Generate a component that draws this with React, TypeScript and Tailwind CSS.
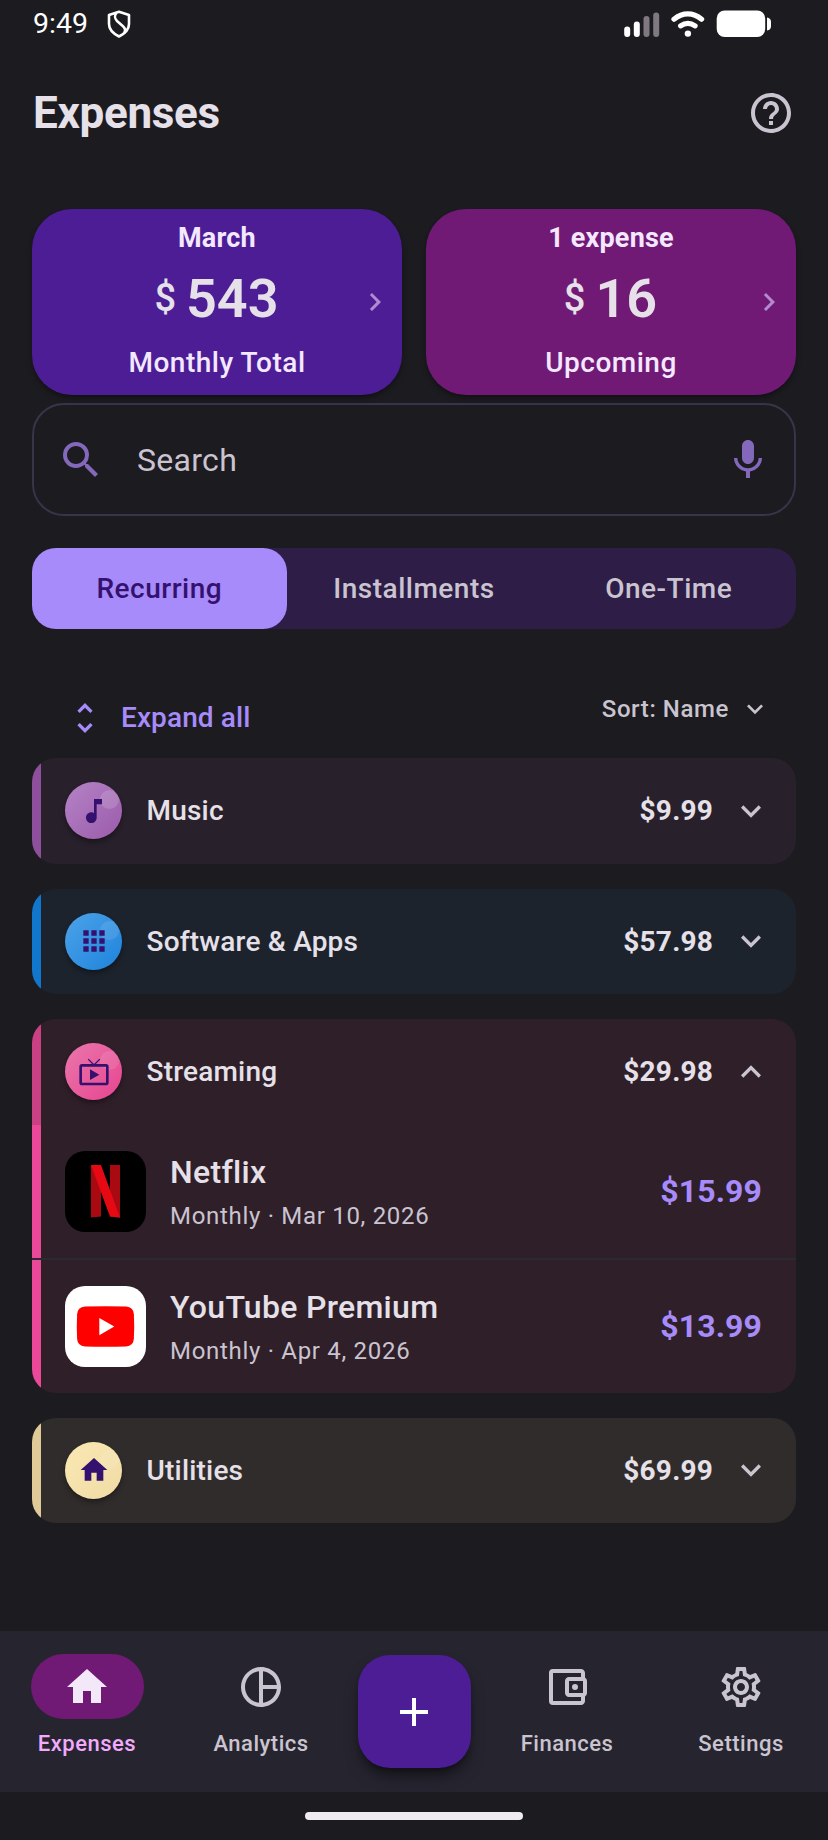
import type { IconType } from 'react-icons';
import {
  MdAdd,
  MdApps,
  MdChevronRight,
  MdExpandLess,
  MdExpandMore,
  MdHelpOutline,
  MdHome,
  MdLiveTv,
  MdMic,
  MdMusicNote,
  MdOutlineAccountBalanceWallet,
  MdOutlinePieChart,
  MdOutlineSettings,
  MdSearch,
  MdUnfoldMore,
} from 'react-icons/md';

const summaries = [
  { top: 'March', amount: '543', bottom: 'Monthly Total', bg: 'bg-[#4c1d95]' },
  { top: '1 expense', amount: '16', bottom: 'Upcoming', bg: 'bg-[#701a75]' },
];

const tabs = ['Recurring', 'Installments', 'One-Time'];

type Category = {
  name: string;
  amount: string;
  icon: IconType;
  bg: string;
  bar: string;
  badge: string;
  shine: string;
  items?: { name: string; detail: string; amount: string; logo: () => React.JSX.Element }[];
};

const categories: Category[] = [
  {
    name: 'Music',
    amount: '$9.99',
    icon: MdMusicNote,
    bg: 'bg-[#28202b]',
    bar: 'bg-[#8e4f9c]',
    badge: 'from-[#b583c6] to-[#9a5bab]',
    shine: 'top-2 right-[3px] size-[19px] bg-white/15',
  },
  {
    name: 'Software & Apps',
    amount: '$57.98',
    icon: MdApps,
    bg: 'bg-[#1c232d]',
    bar: 'bg-[#1177cc]',
    badge: 'from-[#4ba2e8] to-[#1b84dc]',
    shine: 'top-2 right-[3px] size-[19px] bg-white/10',
  },
  {
    name: 'Streaming',
    amount: '$29.98',
    icon: MdLiveTv,
    bg: 'bg-[#2f1f29]',
    bar: 'bg-[#c94083]',
    badge: 'from-[#ea76ad] to-[#e6428f]',
    shine: 'top-2 right-[3px] size-[19px] bg-white/10',
    items: [
      { name: 'Netflix', detail: 'Monthly · Mar 10, 2026', amount: '$15.99', logo: NetflixLogo },
      { name: 'YouTube Premium', detail: 'Monthly · Apr 4, 2026', amount: '$13.99', logo: YouTubeLogo },
    ],
  },
  {
    name: 'Utilities',
    amount: '$69.99',
    icon: MdHome,
    bg: 'bg-[#302c2b]',
    bar: 'bg-[#e0cb98]',
    badge: 'from-[#fae8b4] to-[#f0dba4]',
    shine: 'top-2 right-[3px] size-[19px] bg-white/10',
  },
];

function NetflixLogo() {
  return (
    <svg viewBox="0 0 81 81" className="size-[81px] rounded-[20px] bg-black">
      <path d="M26 14h10v51.400q-5 .3-10 1.100z" fill="#a90a12" />
      <path d="M45 14h10v52.500q-5-.8-10-1.100z" fill="#a90a12" />
      <path d="M26 14h10l19 52.500q-5-.8-10-1.100z" fill="#e50914" />
    </svg>
  );
}

function YouTubeLogo() {
  return (
    <svg viewBox="0 0 81 81" className="size-[81px] rounded-[20px] bg-white">
      <path
        d="M20 20.600q20.500-.8 41 0 7.500.4 7.900 7.900.6 12 0 24-.4 7.500-7.900 7.900-20.500.8-41 0-7.500-.4-7.900-7.900-.6-12 0-24 .4-7.500 7.900-7.900z"
        fill="#ff0000"
      />
      <path d="M34.300 32v17.200L49.300 40.600z" fill="#fff" />
    </svg>
  );
}

function StatusBar() {
  return (
    <div className="flex h-12 items-center pr-[57px] pl-[33px] text-white">
      <span className="w-[55px] text-[28.500px] leading-none">9:49</span>
      <svg viewBox="0 0 24 28" className="ml-[19px] h-7 w-6" fill="none" stroke="#fff" strokeWidth="2.600" strokeLinejoin="round">
        <path d="M12 1.800 22 5v9c0 5.500-4.500 9.700-10 12.500C6.500 23.700 2 19.500 2 14V5z" />
        <path d="M9.500 2.800C7.500 5 7.500 8.500 10 11l6 5.200c2.500 2.200 2.600 4.500 1.300 6.800" />
      </svg>
      <svg viewBox="0 0 148 28" className="ml-auto h-7 w-[148px]" fill="#fff">
        <rect x="1.200" y="16.500" width="6" height="10.500" rx="3" />
        <rect x="10.800" y="11.500" width="6" height="15.500" rx="3" />
        <rect x="20.500" y="6" width="6" height="21" rx="3" fill="#7f7881" />
        <rect x="30.200" y="2.500" width="6" height="24.500" rx="3" fill="#7f7881" />
        <g fill="none" stroke="#fff" strokeWidth="5.200" strokeLinecap="round">
          <path d="M51 9.200c8.600-7 19-7 27.600 0" />
          <path d="M57.600 15.800c4.500-3 10-3 14.500 0" />
        </g>
        <circle cx="64.900" cy="23.600" r="3.200" />
        <rect x="93.700" y="0.500" width="48.500" height="26.500" rx="8" />
        <path d="M144 7.500q4 .5 4 4.500v4q0 4-4 4.500z" />
      </svg>
    </div>
  );
}

function CategoryCard({ category }: { category: Category }) {
  const Chevron = category.items ? MdExpandLess : MdExpandMore;
  return (
    <div className={`overflow-hidden rounded-3xl ${category.bg}`}>
      <div className="flex h-[105.500px]">
        <div className={`w-[9px] ${category.bar}`} />
        <div className="flex flex-1 items-center pr-[25px] pl-6">
          <div
            className={`relative flex size-[57px] items-center justify-center overflow-hidden rounded-full bg-linear-to-br shadow-md shadow-black/30 ${category.badge}`}
          >
            <span className={`absolute rounded-full ${category.shine}`} />
            <category.icon className="relative size-8 text-[#35116f]" />
          </div>
          <span className="ml-[24.500px] pt-px text-[28px] font-medium tracking-[0.2px]">{category.name}</span>
          <span className="ml-auto pt-px text-[28px] font-bold tracking-[0.2px]">{category.amount}</span>
          <Chevron className="ml-[18px] size-10 text-[#cac4d0]" />
        </div>
      </div>
      {category.items?.map((item, i) => (
        <div key={item.name}>
          {i > 0 && <div className="h-[2px] bg-[#2a2a33]" />}
          <div className="flex h-[133px]">
            <div className="w-[9px] bg-[#ec4899]" />
            <div className="flex flex-1 items-center pr-[34px] pl-6">
              <item.logo />
              <div className="ml-6 pt-[5px]">
                <div className="text-[32px] leading-[44px] font-medium tracking-[0.3px]">{item.name}</div>
                <div className="text-[24px] leading-[44px] tracking-[0.700px] text-[#cac4d0]">{item.detail}</div>
              </div>
              <span className="ml-auto text-[32px] font-bold tracking-[0.1px] text-[#a78bfa]">{item.amount}</span>
            </div>
          </div>
        </div>
      ))}
    </div>
  );
}

function NavItem({ icon: Icon, label, active = false }: { icon: IconType; label: string; active?: boolean }) {
  return (
    <div className="flex w-[174px] flex-col items-center">
      <div
        className={
          active
            ? 'flex h-[65px] w-[113px] items-center justify-center rounded-full bg-[#701a75] text-[#f3e8f7]'
            : 'flex h-[65px] w-[113px] items-center justify-center text-[#cac4d0]'
        }
      >
        <Icon className="size-12" />
      </div>
      <span
        className={
          active
            ? 'mt-2.5 text-[22px] leading-[30px] font-medium tracking-[0.5px] text-[#f0abfc]'
            : 'mt-2.5 text-[22px] leading-[30px] font-medium tracking-[0.5px] text-[#cac4d0]'
        }
      >
        {label}
      </span>
    </div>
  );
}

export default function App() {
  return (
    <div className="flex h-[1840px] w-[828px] flex-col overflow-hidden bg-[#1c1b20] font-['Roboto',sans-serif] text-[#e6e1e9]">
      <StatusBar />

      <header className="flex h-[130px] items-center justify-between px-[33px]">
        <h1 className="text-[44px] font-bold tracking-[-0.3px]">Expenses</h1>
        <MdHelpOutline className="size-12 text-[#cac4d0]" />
      </header>

      <main className="mt-[31px] flex flex-1 flex-col px-8">
        <div className="grid grid-cols-2 gap-6">
          {summaries.map((s) => (
            <div
              key={s.bottom}
              className={`relative flex h-[186px] flex-col items-center rounded-[40px] pt-[13px] shadow-md shadow-black/30 ${s.bg}`}
            >
              <span className="text-[27px] leading-8 font-bold tracking-[0.2px] text-[#f3e8ff]">{s.top}</span>
              <div className="mt-3 flex h-16 items-center pr-px">
                <span className="mr-2.5 text-[38px] font-medium">$</span>
                <span className="text-[54px] font-semibold">{s.amount}</span>
              </div>
              <span className="mt-[17px] text-[28px] leading-8 font-medium tracking-[0.5px] text-[#f3e8ff]">{s.bottom}</span>
              <MdChevronRight className="absolute top-[75px] right-[9px] size-9 text-[#b18ad0]" />
            </div>
          ))}
        </div>

        <div className="mt-2 flex h-[113px] items-center rounded-[32px] border-2 border-[#39344a] pr-[22px] pl-[23px]">
          <MdSearch className="size-12 text-[#8468bb]" />
          <span className="ml-8 text-[32px] tracking-[0.3px] text-[#cac4d0]">Search</span>
          <MdMic className="ml-auto size-12 text-[#8468bb]" />
        </div>

        <div className="mt-8 grid h-[81px] grid-cols-3 rounded-3xl bg-[#2e1d47]">
          {tabs.map((tab, i) => (
            <div
              key={tab}
              className={
                i === 0
                  ? 'flex items-center justify-center rounded-3xl bg-[#a78bfa] text-[28px] font-medium tracking-[0.5px] text-[#35116f]'
                  : 'flex items-center justify-center text-[28px] font-medium tracking-[0.5px] text-[#cac4d0]'
              }
            >
              {tab}
            </div>
          ))}
        </div>

        <div className="mt-[60px] flex h-[69px] items-start justify-between pr-[25px] pl-[33px]">
          <div className="mt-[9px] flex items-center text-[#a78bfa]">
            <MdUnfoldMore className="size-10" />
            <span className="ml-4 text-[28px] leading-10 font-medium tracking-[0.1px]">Expand all</span>
          </div>
          <div className="flex items-center text-[#cac4d0]">
            <span className="text-[24px] leading-10 font-medium tracking-[0.600px]">Sort: Name</span>
            <MdExpandMore className="ml-2.5 size-8" />
          </div>
        </div>

        <div className="flex flex-col gap-[25px]">
          {categories.map((category) => (
            <CategoryCard key={category.name} category={category} />
          ))}
        </div>
      </main>

      <nav className="flex h-[161px] items-start bg-[#26242f] pt-[23px]">
        <NavItem icon={MdHome} label="Expenses" active />
        <NavItem icon={MdOutlinePieChart} label="Analytics" />
        <div className="mx-[9.500px] mt-px flex size-[113px] items-center justify-center rounded-[32px] bg-[#4c1d95] shadow-lg shadow-black/50">
          <MdAdd className="size-12 text-white" />
        </div>
        <NavItem icon={MdOutlineAccountBalanceWallet} label="Finances" />
        <NavItem icon={MdOutlineSettings} label="Settings" />
      </nav>

      <div className="flex h-12 justify-center pt-5">
        <div className="h-2 w-[218px] rounded-full bg-[#f0eaf1]" />
      </div>
    </div>
  );
}
